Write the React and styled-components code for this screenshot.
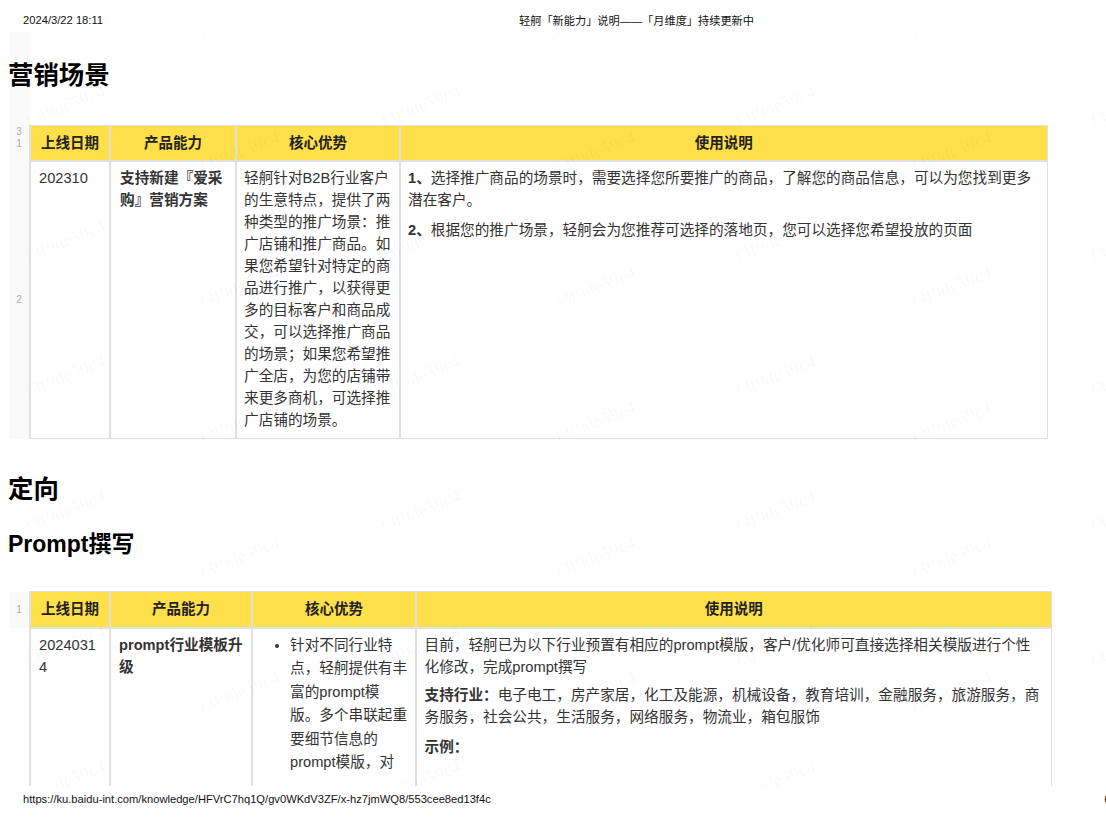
import styled, { createGlobalStyle } from 'styled-components';

const GlobalStyle = createGlobalStyle`
  html, body {
    margin: 0;
    padding: 0;
    background: #fff;
    overflow: hidden;
  }
  body {
    font-family: "Liberation Sans", "Noto Sans CJK SC", sans-serif;
    color: #333;
  }
`;

const Page = styled.div`
  width: 1106px;
  height: 822px;
  overflow: hidden;
`;

const PrintHeader = styled.header`
  display: grid;
  grid-template-columns: 496px auto;
  align-items: center;
  height: 32px;
  padding: 8px 0 0 23px;
  box-sizing: border-box;
  font-size: 11.2px;
  color: #111;
`;

const Content = styled.main`
  position: relative;
  height: 754px;
  overflow: hidden;
`;

const Sheet = styled.section`
  background: ${(p) =>
    p.$gutter
      ? 'linear-gradient(to right, transparent 9px, #fafafa 9px, #fafafa 30px, transparent 30px)'
      : 'none'};
`;

const HeadingWrap = styled.div`
  padding-left: 8px;
`;

const Heading = styled.h1`
  margin: 0;
  padding: ${(p) => p.$pad || '0'};
  font-size: 25.4px;
  line-height: 34px;
  font-weight: 700;
  color: #000;
`;

const SubHeading = styled.h2`
  margin: 0;
  padding: ${(p) => p.$pad || '0'};
  font-size: 23px;
  line-height: 30px;
  font-weight: 700;
  color: #000;
`;

const Table = styled.table`
  border-collapse: collapse;
  table-layout: fixed;
  margin-left: 9px;
  width: ${(p) => p.$width}px;
  font-size: 14.65px;
  line-height: 22px;
`;

const Gutter = styled.td`
  padding: 0 0 ${(p) => p.$pb || 0}px;
  font-size: 10px;
  line-height: 12px;
  color: #aaa;
  text-align: center;
  vertical-align: middle;
  background: ${(p) => (p.$shade ? '#fafafa' : 'transparent')};
`;

const Th = styled.th`
  height: 34px;
  padding: 0 8px ${(p) => p.$pb || 0}px;
  background: #ffdf4a;
  border: 2px solid #dee0e3;
  border-right-width: ${(p) => (p.$last ? '1px' : '2px')};
  border-top-width: 1px;
  font-size: 14.5px;
  font-weight: 700;
  color: #222;
  text-align: center;
`;

const Td = styled.td`
  padding: 5px ${(p) => p.$pr || 8}px 7px ${(p) => p.$pl || 7}px;
  border: 2px solid #dee0e3;
  border-right-width: ${(p) => (p.$last ? '1px' : '2px')};
  border-bottom-width: 1px;
  vertical-align: top;
  overflow-wrap: anywhere;
  font-weight: ${(p) => (p.$bold ? 700 : 400)};
`;

const Para = styled.p`
  margin: 0 0 ${(p) => p.$gap || 8}px;
`;

const Strong = styled.strong`
  font-weight: 700;
`;

const BulletList = styled.ul`
  margin: 0;
  padding: 0 0 0 30px;
  line-height: 23.4px;
`;

const Watermark = styled.span.attrs((p) => ({
  style: { left: p.$x - 42, top: p.$y - 10 },
}))`
  position: absolute;
  font-family: "Liberation Serif", serif;
  font-size: 18px;
  line-height: 20px;
  letter-spacing: 0.3px;
  color: rgba(0, 0, 0, 0.035);
  white-space: nowrap;
  transform: rotate(-22deg);
  pointer-events: none;
`;

const Footer = styled.footer`
  display: flex;
  justify-content: space-between;
  align-items: center;
  height: 26px;
  padding-left: 23px;
  font-size: 11.17px;
  color: #111;
  white-space: nowrap;
`;

const PageNo = styled.span`
  margin-right: -20px;
`;

const colsA = [21, 80, 126, 164, 647];
const colsB = [21, 80, 142, 164, 635];

function Cols({ widths }) {
  return (
    <colgroup>
      {widths.map((w, i) => (
        <col key={i} width={w} />
      ))}
    </colgroup>
  );
}

// two staggered watermark sets, centres read off the page, 135px apart
const marks = [];
for (let row = 0; row < 6; row++) {
  [65, 420, 775, 1130].forEach((x) => marks.push({ x, y: 106 - 32 + row * 135 }));
  [239, 595, 951].forEach((x) => marks.push({ x, y: 17 - 32 + row * 135 }));
}

export default function App() {
  return (
    <Page>
      <GlobalStyle />
      <PrintHeader>
        <div>2024/3/22 18:11</div>
        <div>轻舸「新能力」说明——「月维度」持续更新中</div>
      </PrintHeader>

      <Content>
        <Sheet $gutter>
          <HeadingWrap>
            <Heading $pad="26px 0 33px">营销场景</Heading>
          </HeadingWrap>
          <Table $width={1038}>
            <Cols widths={colsA} />
            <tbody>
              <tr>
                <Gutter $pb={10}>3<br />1</Gutter>
                <Th>上线日期</Th>
                <Th>产品能力</Th>
                <Th>核心优势</Th>
                <Th $last>使用说明</Th>
              </tr>
              <tr>
                <Gutter>2</Gutter>
                <Td $pl={8}>202310</Td>
                <Td $pl={9} $bold>支持新建『爱采购』营销方案</Td>
                <Td>
                  轻舸针对B2B行业客户的生意特点，提供了两种类型的推广场景：推广店铺和推广商品。如果您希望针对特定的商品进行推广，以获得更多的目标客户和商品成交，可以选择推广商品的场景；如果您希望推广全店，为您的店铺带来更多商机，可选择推广店铺的场景。
                </Td>
                <Td $last>
                  <Para>
                    <Strong>1、</Strong>选择推广商品的场景时，需要选择您所要推广的商品，了解您的商品信息，可以为您找到更多潜在客户。
                  </Para>
                  <Para>
                    <Strong>2、</Strong>根据您的推广场景，轻舸会为您推荐可选择的落地页，您可以选择您希望投放的页面
                  </Para>
                </Td>
              </tr>
            </tbody>
          </Table>
        </Sheet>

        <HeadingWrap>
          <Heading $pad="33px 0 0">定向</Heading>
          <SubHeading $pad="23px 0 32px">Prompt撰写</SubHeading>
        </HeadingWrap>

        <Table $width={1042}>
          <Cols widths={colsB} />
          <tbody>
            <tr>
              <Gutter $shade>1</Gutter>
              <Th $pb={1}>上线日期</Th>
              <Th $pb={1}>产品能力</Th>
              <Th $pb={1}>核心优势</Th>
              <Th $pb={1} $last>使用说明</Th>
            </tr>
            <tr>
              <Gutter />
              <Td $pl={8}>20240314</Td>
              <Td $pl={8} $bold>prompt行业模板升级</Td>
              <Td $pr={7}>
                <BulletList>
                  <li>
                    针对不同行业特点，轻舸提供有丰富的prompt模版。多个串联起重要细节信息的prompt模版，对
                  </li>
                </BulletList>
              </Td>
              <Td $pl={7.5} $last>
                <Para $gap={6}>
                  目前，轻舸已为以下行业预置有相应的prompt模版，客户/优化师可直接选择相关模版进行个性化修改，完成prompt撰写
                </Para>
                <Para>
                  <Strong>支持行业：</Strong>电子电工，房产家居，化工及能源，机械设备，教育培训，金融服务，旅游服务，商务服务，社会公共，生活服务，网络服务，物流业，箱包服饰
                </Para>
                <Para>
                  <Strong>示例：</Strong>
                </Para>
                <Para>&nbsp;</Para>
              </Td>
            </tr>
          </tbody>
        </Table>

        {marks.map((m, i) => (
          <Watermark key={i} $x={m.x} $y={m.y}>
            f3f9de59c4
          </Watermark>
        ))}
      </Content>

      <Footer>
        <span>https://ku.baidu-int.com/knowledge/HFVrC7hq1Q/gv0WKdV3ZF/x-hz7jmWQ8/553cee8ed13f4c</span>
        <PageNo>6/13</PageNo>
      </Footer>
    </Page>
  );
}
